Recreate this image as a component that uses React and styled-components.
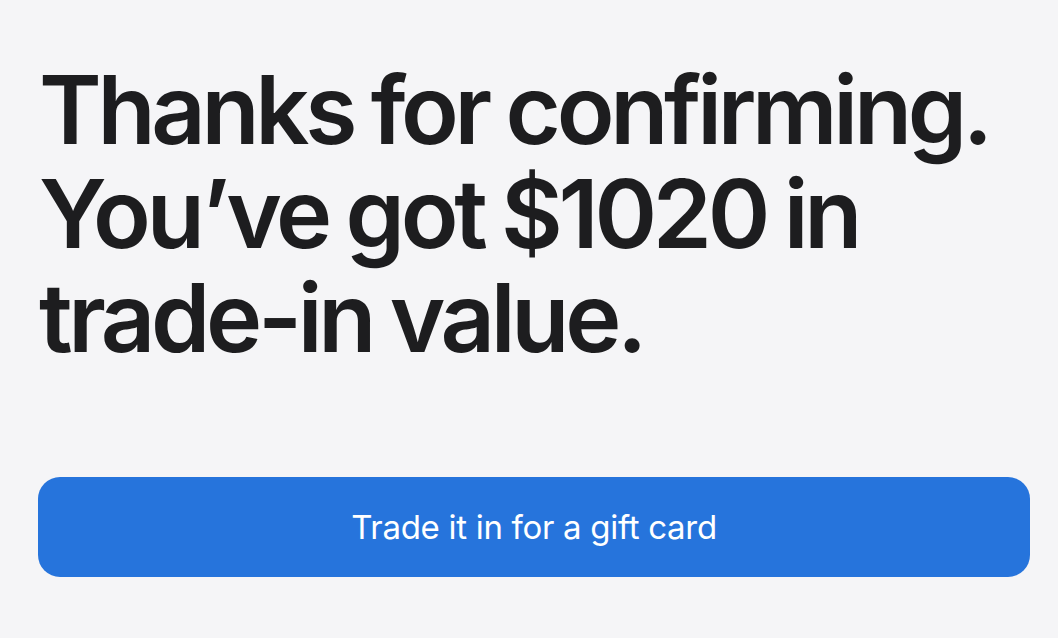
import React from "react";
import styled, { createGlobalStyle } from "styled-components";

const GlobalStyle = createGlobalStyle`
  html, body {
    margin: 0;
    padding: 0;
    background: #f5f5f7;
  }
  body {
    font-family: Inter, "Noto Sans", sans-serif;
    -webkit-font-smoothing: antialiased;
  }
`;

const Page = styled.div`
  width: 1058px;
  height: 638px;
  box-sizing: border-box;
  padding: 58px 28px 0 38px;
  background: #f5f5f7;
  display: flex;
  flex-direction: column;
`;

const Heading = styled.h1`
  margin: 0 0 0 1px;
  font-size: 95px;
  line-height: 104px;
  font-weight: 600;
  letter-spacing: -4.3px;
  word-spacing: -2px;
  white-space: nowrap;
  color: #1d1d1f;
`;

const Button = styled.button`
  margin-top: 107px;
  width: 992px;
  height: 100px;
  border: none;
  border-radius: 22px;
  background: #2674dc;
  color: #ffffff;
  font-family: Inter, "Noto Sans", sans-serif;
  font-size: 33px;
  font-weight: 400;
  letter-spacing: -0.3px;
  cursor: pointer;
`;

const App = () => {
  return (
    <>
      <GlobalStyle />
      <Page>
        <Heading>
          Thanks for confirming.
          <br />
          You’ve got $1020 in
          <br />
          trade-in value.
        </Heading>
        <Button>Trade it in for a gift card</Button>
      </Page>
    </>
  );
};

export default App;
